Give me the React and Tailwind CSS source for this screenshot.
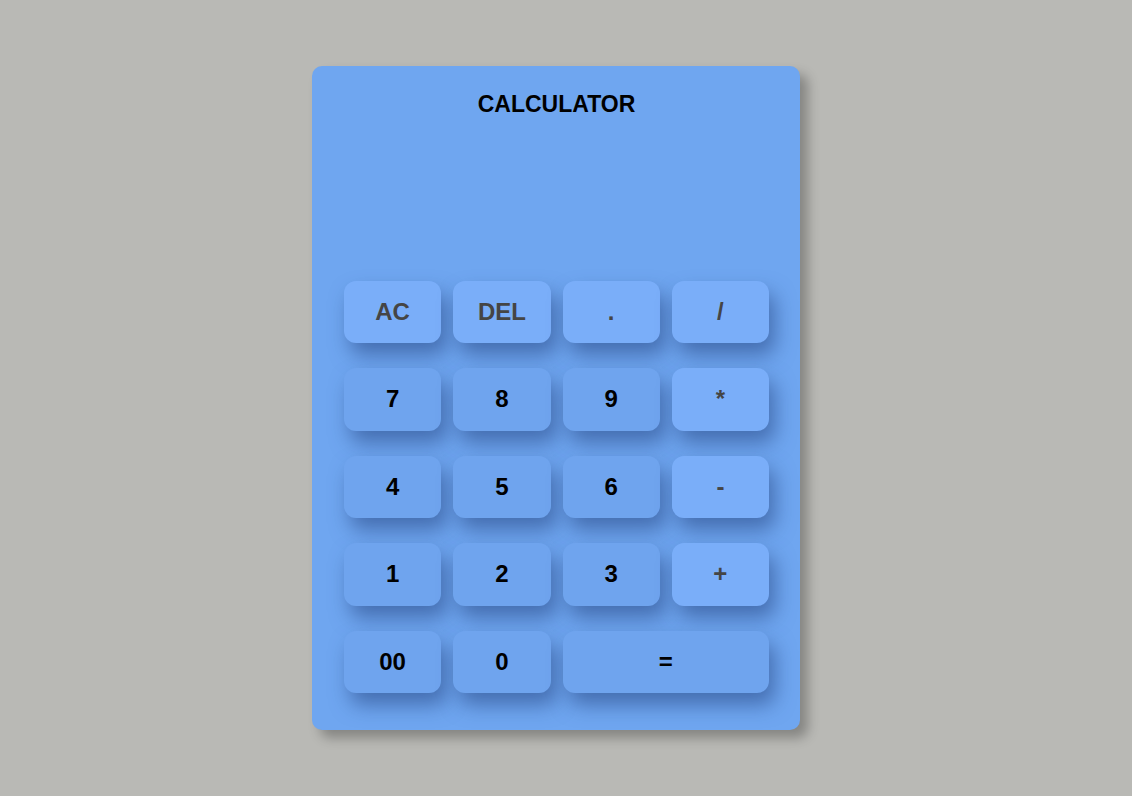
const rows = [
  [
    { label: "AC", op: true },
    { label: "DEL", op: true },
    { label: ".", op: true },
    { label: "/", op: true },
  ],
  [
    { label: "7" },
    { label: "8" },
    { label: "9" },
    { label: "*", op: true },
  ],
  [
    { label: "4" },
    { label: "5" },
    { label: "6" },
    { label: "-", op: true },
  ],
  [
    { label: "1" },
    { label: "2" },
    { label: "3" },
    { label: "+", op: true },
  ],
  [
    { label: "00" },
    { label: "0" },
    { label: "=", wide: true },
  ],
];

export default function App() {
  return (
    <main
      className="flex min-h-screen justify-center bg-[#b9b9b5] pr-5 pt-[66px]"
      style={{ fontFamily: '"Liberation Sans", Arial, sans-serif' }}
    >
      <div className="flex h-[664px] w-[488px] flex-col rounded-[10px] bg-[#6fa6f0] pl-8 pr-[31px] pb-[37px] pt-[23px] shadow-[8px_8px_12px_rgba(0,0,0,0.28)]">
        <h1 className="text-center text-[23px] font-bold leading-[30px] text-black">
          CALCULATOR
        </h1>
        <div className="flex-1" />
        <div className="grid grid-cols-4 gap-x-3 gap-y-[25px]">
          {rows.flat().map((b) => (
            <button
              key={b.label}
              className={`h-[62.5px] rounded-xl text-[24px] font-bold shadow-[6px_12px_20px_rgba(35,65,125,0.55)] ${
                b.wide ? "col-span-2" : ""
              } ${b.op ? "bg-[#7aaef9] text-[#454545]" : "bg-[#6fa4ee] text-black"}`}
            >
              {b.label}
            </button>
          ))}
        </div>
      </div>
    </main>
  );
}
